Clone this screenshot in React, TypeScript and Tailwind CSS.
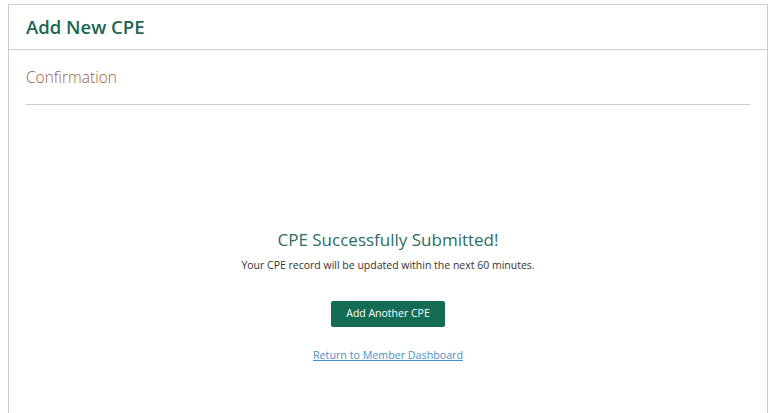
export default function App() {
  return (
    <div className="min-h-[413px] bg-white px-[8px] pt-[4px] font-['Open_Sans',sans-serif]">
      <div className="w-[760px]">
        <div className="flex h-[46px] items-center border border-[#cccccc] px-[17px]">
          <h1 className="text-[18.5px] font-semibold text-[#1d6650]">Add New CPE</h1>
        </div>
        <div className="h-[363px] border-x border-[#cccccc] px-[17px]">
          <div className="border-b border-[#cccccc] pb-[15px] pt-[16px]">
            <h2 className="text-[15.5px] font-light text-[#9a5e3e]">Confirmation</h2>
          </div>
          <div className="flex flex-col items-center pt-[123px]">
            <h3 className="text-[17px] leading-[24px] text-[#2b6e68]">CPE Successfully Submitted!</h3>
            <p className="mt-[6px] text-[10.5px] text-[#333333]">
              Your CPE record will be updated within the next 60 minutes.
            </p>
            <button
              type="button"
              className="mt-[27px] h-[26px] w-[114px] rounded-[2px] bg-[#146c54] text-[10.5px] text-white"
            >
              Add Another CPE
            </button>
            <a href="#" className="mt-[20px] text-[10.7px] text-[#4a8fc8] underline">
              Return to Member Dashboard
            </a>
          </div>
        </div>
      </div>
    </div>
  )
}
